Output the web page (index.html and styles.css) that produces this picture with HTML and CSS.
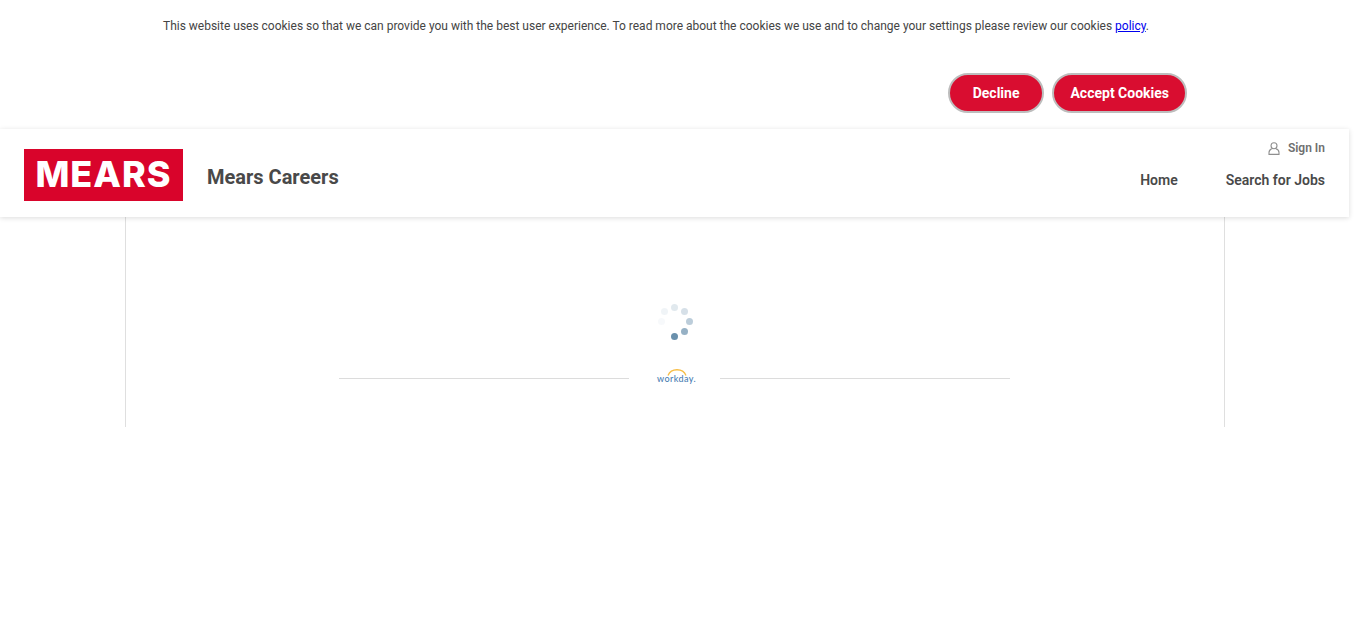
FILE: index.html
```html
<!DOCTYPE html>
<html lang="en">
<head>
<meta charset="utf-8">
<title>Mears Careers</title>
<link rel="stylesheet" href="styles.css">
</head>
<body>
<div class="page">
  <section class="cookie">
    <p class="cookie-text">This website uses cookies so that we can provide you with the best user experience. To read more about the cookies we use and to change your settings please review our cookies <a href="#">policy</a>.</p>
    <div class="cookie-actions">
      <button class="btn btn-decline">Decline</button>
      <button class="btn">Accept Cookies</button>
    </div>
  </section>
  <header class="header">
    <div class="brand">
      <div class="logo">MEARS</div>
      <div class="title">Mears Careers</div>
    </div>
    <div class="nav-area">
      <div class="signin">
        <svg class="user" width="12" height="13" viewBox="0 0 12 13" fill="none" stroke="#8f8f8f" stroke-width="1.100"><circle cx="6" cy="3.800" r="3"/><path d="M4.200 6.800C2.300 7.300 1 8.800 1 10.500v1.900h10v-1.900c0-1.700-1.300-3.200-3.200-3.700"/></svg>
        <span>Sign In</span>
      </div>
      <nav class="nav"><span>Home</span><span>Search for Jobs</span></nav>
    </div>
  </header>
  <main class="main">
    <div class="spinner">
      <i class="d d1"></i><i class="d d2"></i><i class="d d3"></i><i class="d d4"></i><i class="d d5"></i><i class="d d6"></i><i class="d d7"></i>
    </div>
    <div class="divider">
      <span class="rule"></span>
      <div class="wd">
        <svg class="arc" width="20" height="7" viewBox="0 0 20 7" fill="none"><path d="M1 6.500C4 -1.200 16 -1.200 19 6.500" stroke="#f7bd45" stroke-width="1.300"/></svg>
        <span class="wd-text">workday.</span>
      </div>
      <span class="rule"></span>
    </div>
  </main>
</div>
</body>
</html>
```
FILE: styles.css
```css
* { box-sizing: border-box; }
html, body { margin: 0; padding: 0; background: #fff; }
body { font-family: Roboto, "Liberation Sans", sans-serif; color: #494949; overflow: hidden; }
.page { width: 1349px; }
.cookie { height: 129px; padding: 18px 163px 0; position: relative; }
.cookie-text { margin: 0; font-size: 12px; line-height: 16px; color: #444; white-space: nowrap; letter-spacing: -0.006px; }
.cookie-text a { color: #0000ee; }
.cookie-actions { display: flex; justify-content: flex-end; gap: 8px; margin-top: 39px; margin-right: -1px; }
.btn { height: 40px; padding: 0 16px; border: 2px solid #bdbdbd; border-radius: 20px; background: #d90d30; color: #fff; font: 700 14px Roboto, sans-serif; }
.btn-decline { padding: 0 23px; }
.header { height: 88px; display: flex; justify-content: space-between; padding: 0 24px; background: #fff; box-shadow: 0 1px 5px rgba(0,0,0,.14); position: relative; z-index: 1; }
.brand { display: flex; align-items: center; gap: 24px; padding-top: 4px; }
.logo { width: 159px; height: 52px; background: #d9042b; color: #fff; font: 800 36px/50px Inter, Roboto, sans-serif; letter-spacing: 1px; text-align: center; }
.title { font-size: 20px; font-weight: 700; color: #494949; padding-top: 3px; }
.nav-area { display: flex; flex-direction: column; align-items: flex-end; padding-top: 12px; }
.signin { display: flex; align-items: center; gap: 8px; font-size: 12px; font-weight: 600; line-height: 14px; color: #6f6f6f; }
.nav { display: flex; gap: 48px; margin-top: 15px; font-size: 14px; font-weight: 600; line-height: 20px; color: #494949; }
.main { width: 1100px; height: 210px; margin-left: 125px; border-left: 1px solid #dfdfdf; border-right: 1px solid #dfdfdf; display: flex; flex-direction: column; align-items: center; padding-top: 87px; }
.spinner { width: 36px; height: 36px; position: relative; left: 1px; }
.d { position: absolute; width: 7px; height: 7px; border-radius: 50%; background: #6a90ac; }
.d1 { left: 13px; top: 29px; opacity: 1; }
.d2 { left: 23px; top: 24px; opacity: .7; }
.d3 { left: 28px; top: 14px; opacity: .45; }
.d4 { left: 23px; top: 4px; opacity: .28; }
.d5 { left: 13px; top: 0; opacity: .2; }
.d6 { left: 3px; top: 4px; opacity: .1; }
.d7 { left: 0; top: 14px; opacity: .05; }
.divider { width: 671px; display: flex; align-items: center; margin-top: 29px; margin-right: 1px; }
.rule { flex: 1; height: 1px; background: #dcdcdc; }
.wd { width: 91px; height: 18px; display: flex; flex-direction: column; align-items: center; position: relative; }
.arc { display: block; margin-left: 4px; }
.wd-text { position: absolute; top: 4px; left: 2px; right: -2px; text-align: center; font: 500 9px/12px Lato, Roboto, sans-serif; letter-spacing: .4px; color: #4a7eb3; }
```
